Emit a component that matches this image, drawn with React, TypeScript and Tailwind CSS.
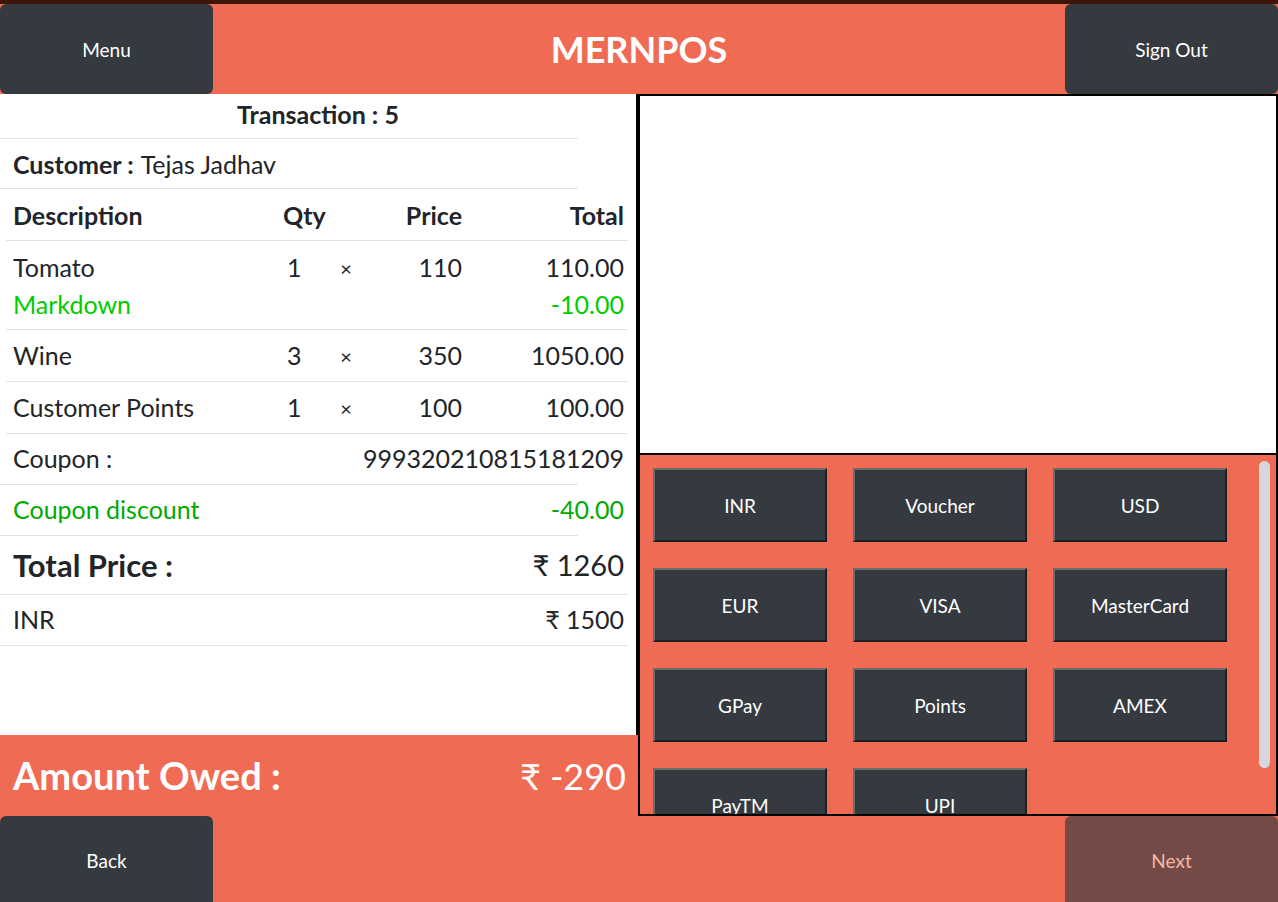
import React from 'react';

const font = { fontFamily: 'Lato, "Noto Sans", sans-serif' };

const items = [
  { name: 'Tomato', qty: 1, price: 110, total: '110.00', markdown: '-10.00' },
  { name: 'Wine', qty: 3, price: 350, total: '1050.00' },
  { name: 'Customer Points', qty: 1, price: 100, total: '100.00' },
];

const tenders = ['INR', 'Voucher', 'USD', 'EUR', 'VISA', 'MasterCard', 'GPay', 'Points', 'AMEX', 'PayTM', 'UPI'];

function ItemRow({ item }: { item: (typeof items)[number] }) {
  return (
    <div className="ml-[6px] w-[622px] pl-[7px] pr-[4px] border-b border-[#dee2e6]">
      <div className={`grid grid-cols-[270px_47px_32px_100px_1fr] items-center ${item.markdown ? 'h-[54px]' : 'h-[51px]'}`}>
        <span>{item.name}</span>
        <span className="pl-[4px]">{item.qty}</span>
        <span className="text-center text-[20px]">×</span>
        <span className="text-right">{item.price}</span>
        <span className="text-right">{item.total}</span>
      </div>
      {item.markdown && (
        <div className="flex justify-between items-start h-[34px] text-[#00cc00]">
          <span className="leading-[18px]">Markdown</span>
          <span className="leading-[18px]">{item.markdown}</span>
        </div>
      )}
    </div>
  );
}

export default function App() {
  return (
    <div className="w-[1278px] h-[902px] bg-[#f06b54] flex flex-col overflow-hidden text-[#212529]" style={font}>
      <div className="h-[4px] bg-[#3d1509]" />

      {/* header */}
      <header className="h-[90px] flex justify-between items-stretch">
        <button className="w-[213px] rounded-md bg-[#343a40] text-white text-[19px] pt-[2px]">Menu</button>
        <h1 className="self-center text-white text-[36px] font-bold">MERNPOS</h1>
        <button className="w-[213px] rounded-md bg-[#343a40] text-white text-[19px] pt-[2px]">Sign Out</button>
      </header>

      <div className="h-[722px] flex">
        {/* left: receipt */}
        <div className="w-[638px] flex flex-col">
          <div className="flex-1 bg-white text-[25px] border-r-2 border-black">
            <div className="h-[44px] flex items-center justify-center font-bold pb-[3px]">
              Transaction : 5
            </div>
            <div className="w-[578px] h-[51px] flex items-center pl-[13px] border-y border-[#dee2e6] pt-[3px]">
              <span className="font-bold mr-[7px]">Customer :</span>
              <span>Tejas Jadhav</span>
            </div>
            <div className="ml-[6px] w-[622px] pl-[7px] pr-[4px] border-b border-[#dee2e6]">
              <div className="grid grid-cols-[270px_47px_32px_100px_1fr] items-center h-[51px] font-bold pt-[3px]">
                <span>Description</span>
                <span>Qty</span>
                <span />
                <span className="text-right">Price</span>
                <span className="text-right">Total</span>
              </div>
            </div>
            {items.map((it) => (
              <ItemRow key={it.name} item={it} />
            ))}
            <div className="w-[578px] h-[51px] flex items-center pl-[13px] border-b border-[#dee2e6] overflow-visible">
              <span>Coupon :</span>
              <span className="ml-auto -mr-[46px]">999320210815181209</span>
            </div>
            <div className="w-[578px] h-[51px] flex items-center pl-[13px] border-b border-[#dee2e6] text-[#00aa00]">
              <span>Coupon discount</span>
              <span className="ml-auto -mr-[46px]">-40.00</span>
            </div>
            <div className="w-[628px] h-[59px] flex items-center justify-between pl-[13px] pr-[4px] border-b border-[#dee2e6]">
              <span className="text-[31px] font-bold">Total Price :</span>
              <span className="text-[29px]">₹ 1260</span>
            </div>
            <div className="w-[628px] h-[51px] flex items-center justify-between pl-[13px] pr-[4px] border-b border-[#dee2e6]">
              <span>INR</span>
              <span>₹ 1500</span>
            </div>
          </div>
          <div className="h-[81px] flex items-center justify-between pl-[13px] pr-[12px] text-white">
            <span className="font-bold text-[38px]">Amount Owed :</span>
            <span className="text-[36px]">₹ -290</span>
          </div>
        </div>

        {/* right: display + tenders */}
        <div className="w-[640px] flex flex-col">
          <div className="h-[361px] bg-white border-2 border-black" />
          <div className="relative h-[361px] border-2 border-t-0 border-black overflow-hidden">
            <div className="grid grid-cols-[174px_174px_174px] gap-[26px] pl-[13px] pt-[13px]">
              {tenders.map((t) => (
                <button
                  key={t}
                  className="h-[74px] pt-[3px] bg-[#343a40] text-white text-[19px] border-2 border-t-[#6b6b6b] border-l-[#6b6b6b] border-r-[#1d1f22] border-b-[#1d1f22]"
                >
                  {t}
                </button>
              ))}
            </div>
            <div className="absolute right-[6px] top-[6px] w-[11px] h-[307px] rounded-full bg-[#d4d8dc]" />
          </div>
        </div>
      </div>

      {/* footer */}
      <footer className="h-[86px] flex justify-between items-stretch">
        <button className="w-[213px] rounded-t-md bg-[#343a40] text-white text-[19px] pt-[4px]">Back</button>
        <button className="w-[213px] rounded-t-md bg-[#734a46] text-[#f3b6a8] text-[19px] pt-[4px]">Next</button>
      </footer>
    </div>
  );
}
